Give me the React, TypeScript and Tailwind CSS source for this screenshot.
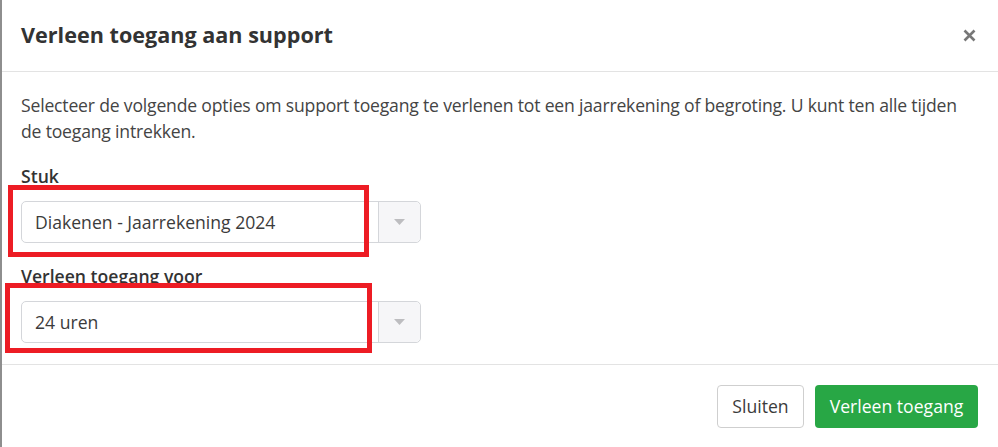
function SelectBox({ value }: { value: string }) {
  return (
    <div className="flex h-[42px] w-[400px] rounded-[5px] border border-[#d4d6da] bg-white">
      <div className="flex flex-1 items-center pl-[13px] text-[17.6px] text-[#3b3b3b]">{value}</div>
      <div className="flex w-[42px] items-center justify-center rounded-r-[5px] border-l border-[#d4d6da] bg-[#f6f6f8]">
        <svg width="11" height="6" viewBox="0 0 11 6">
          <path d="M0 0 H11 L5.5 6 Z" fill="#bdbdc0" />
        </svg>
      </div>
    </div>
  );
}

export default function App() {
  return (
    <div
      className="relative h-[447px] w-[998px] overflow-hidden border-l-2 border-[#8e8e8e] bg-white text-[#3b3b3b]"
      style={{ fontFamily: '"Open Sans", "Noto Sans", sans-serif' }}
    >
      <div className="flex h-[72px] items-center justify-between border-b border-[#e3e3e3] pl-[19px] pr-[22px]">
        <h1 className="text-[21.6px] font-bold text-[#333]">Verleen toegang aan support</h1>
        <svg width="13" height="13" viewBox="0 0 13 13" className="mb-[1px]">
          <path d="M1.5 1.5 L11.5 11.5 M11.5 1.5 L1.5 11.5" stroke="#777" strokeWidth="2.6" strokeLinecap="butt" />
        </svg>
      </div>

      <div className="px-[19px] pt-[20px] pb-[21px]">
        <p className="text-[17.6px] leading-[26px] tracking-[-0.19px] text-[#444]">
          Selecteer de volgende opties om support toegang te verlenen tot een jaarrekening of begroting. U kunt ten alle tijden
          de toegang intrekken.
        </p>
        <label className="mt-[20px] mb-[13px] block text-[17.6px] leading-[24px] font-semibold text-[#333]">Stuk</label>
        <SelectBox value="Diakenen - Jaarrekening 2024" />
        <label className="mt-[21px] mb-[13px] block text-[17.6px] leading-[24px] font-semibold text-[#333]">
          Verleen toegang voor
        </label>
        <SelectBox value="24 uren" />
      </div>

      <div className="flex justify-end gap-[11px] border-t border-[#e3e3e3] px-[20px] pt-[20px]">
        <button className="h-[43px] w-[87px] rounded-[4px] border border-[#cfcfcf] bg-white text-[17.6px] text-[#3b3b3b]">
          Sluiten
        </button>
        <button className="h-[43px] w-[163px] rounded-[4px] bg-[#28a745] text-[17.6px] text-white">Verleen toegang</button>
      </div>

      {/* red annotation frames */}
      <div className="absolute left-[6px] top-[185px] h-[72px] w-[361px] border-[5px] border-[#ed1c24]" />
      <div className="absolute left-[3px] top-[283px] h-[70px] w-[367px] border-[5px] border-[#ed1c24]" />
    </div>
  );
}
